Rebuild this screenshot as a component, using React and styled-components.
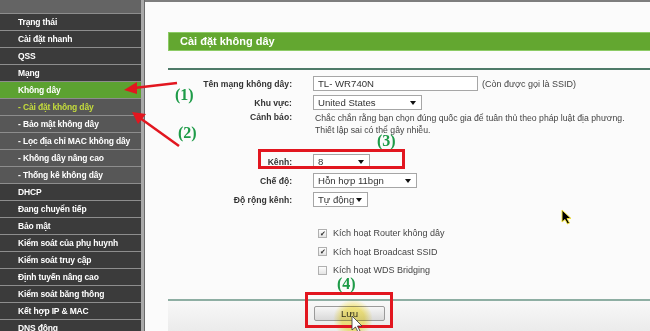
import React from "react";
import styled, { createGlobalStyle } from "styled-components";

const GlobalStyle = createGlobalStyle`
  html, body {
    margin: 0;
    padding: 0;
    background: #fafafa;
    font-family: "Liberation Sans", Arial, sans-serif;
  }
`;

const Page = styled.div`
  position: relative;
  display: flex;
  width: 650px;
  height: 331px;
  overflow: hidden;
`;

const Sidebar = styled.div`
  display: flex;
  flex-direction: column;
  width: 141px;
  flex-shrink: 0;
  padding-top: 13px;
  background: #646464;
  border-right: 3px solid #a9a9a9;
  box-shadow: 1px 0 0 #6a6a6a;
`;

const MenuItem = styled.div`
  height: 16px;
  line-height: 16px;
  border-top: 1px solid #8d8d8d;
  padding-left: 18px;
  font-size: 8.5px;
  letter-spacing: -0.15px;
  font-weight: bold;
  white-space: nowrap;
  color: ${(p) => (p.$current ? "#c4dc3c" : "#ffffff")};
  background: ${(p) =>
    p.$active ? "#5ca231" : p.$sub ? "#575757" : "#3b3b3b"};
`;

const Main = styled.div`
  flex: 1;
  display: flex;
  flex-direction: column;
  padding-left: 23px;
  margin-left: 1px;
  background: #fbfbfb;
  border-top: 2px solid #7e7e7e;
`;

const TitleBar = styled.div`
  margin-top: 30px;
  height: 17px;
  line-height: 17px;
  padding-left: 11px;
  background: #63a730;
  border: 1px solid #8ccb65;
  border-right: none;
  color: #fff;
  font-size: 11px;
  font-weight: bold;
`;

const Divider = styled.div`
  margin-top: ${(p) => p.$top}px;
  border-top: 2px solid ${(p) => p.$color};
`;

const Form = styled.div`
  display: flex;
  flex-direction: column;
  padding-top: 2px;
`;

const Row = styled.div`
  display: flex;
  align-items: center;
  height: ${(p) => p.$h || 19}px;
  margin-top: ${(p) => p.$mt || 0}px;
`;

const Label = styled.div`
  width: 124px;
  padding-right: 21px;
  text-align: right;
  font-size: 8.6px;
  font-weight: bold;
  color: #333;
  white-space: nowrap;
  align-self: ${(p) => (p.$top ? "flex-start" : "center")};
`;

const TextBox = styled.div`
  box-sizing: border-box;
  width: ${(p) => p.$w}px;
  height: 15px;
  line-height: 13px;
  padding-left: 4px;
  border: 1px solid #a6a6a6;
  background: #fff;
  font-size: 9.6px;
  color: #333;
  white-space: nowrap;
`;

const Select = styled(TextBox)`
  position: relative;
  &::after {
    content: "";
    position: absolute;
    right: 5px;
    top: 5px;
    border-left: 3px solid transparent;
    border-right: 3px solid transparent;
    border-top: 4px solid #111;
  }
`;

const Note = styled.span`
  margin-left: 4px;
  font-size: 9px;
  color: #444;
`;

const Warning = styled.div`
  padding-left: 2px;
  font-size: 8.7px;
  line-height: 12px;
  color: #444;
  white-space: nowrap;
  align-self: flex-start;
`;

const CheckRow = styled(Row)`
  padding-left: 150px;
  font-size: 9px;
  color: #444;
`;

const Box = styled.span`
  display: inline-flex;
  align-items: center;
  justify-content: center;
  box-sizing: border-box;
  width: 9px;
  height: 9px;
  margin-right: 6px;
  border: 1px solid #b0b0b0;
  background: linear-gradient(#fdfdfd, #e4e4e4);
  font-size: 7px;
  line-height: 1;
  color: #333;
`;

const Footer = styled.div`
  flex: 1;
  padding-left: 146px;
  padding-top: 5px;
  background: linear-gradient(#f8f8f8, #ebebeb);
`;

const SaveButton = styled.div`
  box-sizing: border-box;
  width: 71px;
  height: 15px;
  line-height: 13px;
  text-align: center;
  border: 1px solid #9a9a9a;
  border-radius: 2px;
  background: linear-gradient(#f6f6f6, #d9d9d9);
  font-size: 9.6px;
  color: #333;
`;

const Overlay = styled.svg`
  position: absolute;
  left: 0;
  top: 0;
  pointer-events: none;
`;

const Callout = styled.div`
  position: absolute;
  left: ${(p) => p.$x}px;
  top: ${(p) => p.$y}px;
  font-family: "Liberation Serif", "Times New Roman", serif;
  font-weight: bold;
  font-size: 16px;
  line-height: 14px;
  color: #1e9b48;
`;

const RedFrame = styled.div`
  position: absolute;
  left: ${(p) => p.$x}px;
  top: ${(p) => p.$y}px;
  width: ${(p) => p.$w}px;
  height: ${(p) => p.$h}px;
  box-sizing: border-box;
  border: 3px solid #e2161f;
`;

const Halo = styled.div`
  position: absolute;
  left: 333px;
  top: 299px;
  width: 40px;
  height: 40px;
  border-radius: 50%;
  mix-blend-mode: multiply;
  background: radial-gradient(rgba(250, 232, 90, 0.75) 40%, rgba(250, 232, 90, 0) 70%);
`;

const menu = [
  { label: "Trạng thái" },
  { label: "Cài đặt nhanh" },
  { label: "QSS" },
  { label: "Mạng" },
  { label: "Không dây", active: true },
  { label: "- Cài đặt không dây", sub: true, current: true },
  { label: "- Bảo mật không dây", sub: true },
  { label: "- Lọc địa chỉ MAC không dây", sub: true },
  { label: "- Không dây nâng cao", sub: true },
  { label: "- Thống kê không dây", sub: true },
  { label: "DHCP" },
  { label: "Đang chuyển tiếp" },
  { label: "Bảo mật" },
  { label: "Kiểm soát của phụ huynh" },
  { label: "Kiểm soát truy cập" },
  { label: "Định tuyến nâng cao" },
  { label: "Kiểm soát băng thông" },
  { label: "Kết hợp IP & MAC" },
  { label: "DNS động" },
];

const checks = [
  { label: "Kích hoạt Router không dây", on: true },
  { label: "Kích hoạt Broadcast SSID", on: true },
  { label: "Kích hoạt WDS Bridging", on: false },
];

export default function App() {
  return (
    <Page>
      <GlobalStyle />
      <Sidebar>
        {menu.map((m) => (
          <MenuItem key={m.label} $active={m.active} $sub={m.sub} $current={m.current}>
            {m.label}
          </MenuItem>
        ))}
      </Sidebar>

      <Main>
        <TitleBar>Cài đặt không dây</TitleBar>
        <Divider $top={17} $color="#4d7a68" />
        <Form>
          <Row $mt={2}>
            <Label>Tên mạng không dây:</Label>
            <TextBox $w={165}>TL- WR740N</TextBox>
            <Note>(Còn được gọi là SSID)</Note>
          </Row>
          <Row>
            <Label>Khu vực:</Label>
            <Select $w={109}>United States</Select>
          </Row>
          <Row $h={22}>
            <Label $top>Cảnh báo:</Label>
            <Warning>
              Chắc chắn rằng bạn chọn đúng quốc gia để tuân thủ theo pháp luật địa phương.
              <br />
              Thiết lập sai có thể gây nhiễu.
            </Warning>
          </Row>
          <Row $mt={18}>
            <Label>Kênh:</Label>
            <Select $w={57}>8</Select>
          </Row>
          <Row>
            <Label>Chế độ:</Label>
            <Select $w={104}>Hỗn hợp 11bgn</Select>
          </Row>
          <Row>
            <Label>Độ rộng kênh:</Label>
            <Select $w={55}>Tự động</Select>
          </Row>
          {checks.map((c, i) => (
            <CheckRow key={c.label} $h={18.5} $mt={i === 0 ? 15 : 0}>
              <Box>{c.on ? "✔" : ""}</Box>
              {c.label}
            </CheckRow>
          ))}
        </Form>
        <Divider $top={19} $color="#8eaea3" />
        <Footer>
          <SaveButton>Lưu</SaveButton>
        </Footer>
      </Main>

      <Halo />
      <RedFrame $x={258} $y={149} $w={147} $h={20} />
      <RedFrame $x={305} $y={292} $w={88} $h={36} />
      <Callout $x={175} $y={88}>(1)</Callout>
      <Callout $x={178} $y={126}>(2)</Callout>
      <Callout $x={377} $y={134}>(3)</Callout>
      <Callout $x={337} $y={277}>(4)</Callout>

      <Overlay width="650" height="331" viewBox="0 0 650 331">
        <line x1="177" y1="83" x2="134" y2="88" stroke="#e2161f" strokeWidth="2.5" />
        <polygon points="124,90 137,82 137,94" fill="#e2161f" />
        <line x1="179" y1="146" x2="140" y2="118" stroke="#e2161f" strokeWidth="2.5" />
        <polygon points="132,112 146,114 138,124" fill="#e2161f" />
        <path
          d="M352 316 L352 330 L355.5 327 L358 332 L360 331 L357.5 326 L362 326 Z"
          fill="#fff"
          stroke="#333"
          strokeWidth="0.8"
        />
        <path
          d="M562 210 L562 222 L565 219.5 L567.5 224 L569.5 223 L567 218.5 L571 218.5 Z"
          fill="#000"
          stroke="#f2e23a"
          strokeWidth="1"
        />
      </Overlay>
    </Page>
  );
}
